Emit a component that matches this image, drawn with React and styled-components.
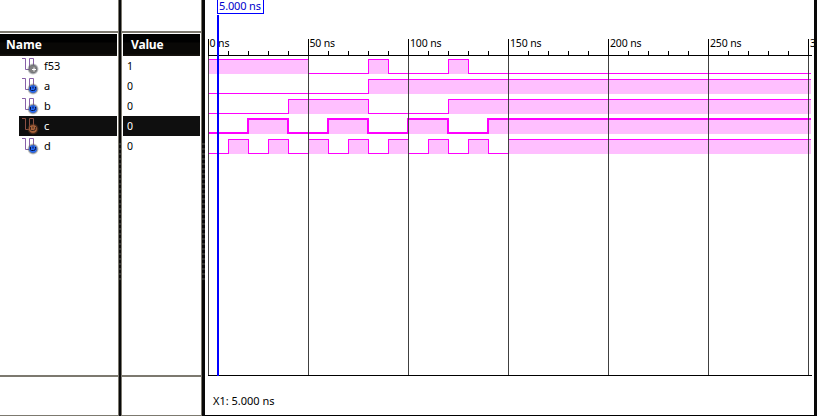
import React from "react";
import styled, { createGlobalStyle, css } from "styled-components";

const GlobalStyle = createGlobalStyle`
  * { box-sizing: border-box; }
  body { margin: 0; background: #fff; overflow: hidden; }
`;

const Window = styled.div`
  display: flex;
  width: 817px;
  height: 416px;
  background: #fff;
  color: #000;
  font: 11px/20px "Noto Sans", "Open Sans", sans-serif;
  overflow: hidden;
`;

const Column = styled.section`
  display: flex;
  flex-direction: column;
  width: ${(p) => p.$width}px;
  flex: none;
  border-bottom: 1px solid #7c796f;
`;

const TopSpace = styled.div`
  height: 33px;
  flex: none;
  border-bottom: 2px solid #7c796f;
`;

const ColumnHeader = styled.header`
  height: 22px;
  margin: 1px 1px 0 ${(p) => p.$inset || 0}px;
  padding-left: ${(p) => p.$pad}px;
  flex: none;
  background: linear-gradient(#000 0 8px, #090806 9px 20px, #17130f 21px);
  color: #fff;
  font: 700 12px/22px "Open Sans", sans-serif;
  letter-spacing: ${(p) => p.$spacing || 0}px;
`;

const Rows = styled.div`
  height: 321px;
  flex: none;
  border-bottom: 2px solid #7c796f;
`;

const Row = styled.div`
  display: flex;
  align-items: center;
  height: 20px;
  margin: 0 1px 0 ${(p) => p.$inset}px;
  padding-left: ${(p) => p.$pad}px;
  ${(p) =>
    p.$selected &&
    css`
      background: #0f0f0f;
      color: #fff;
    `}
`;

const ValueText = styled.span`
  font-size: 10.5px;
  line-height: 20px;
`;

const SignalIcon = styled.svg`
  width: 18px;
  height: 18px;
  flex: none;
  margin-right: 4px;
`;

const Splitter = styled.div`
  width: ${(p) => p.$width}px;
  flex: none;
  padding-top: 143px;
  background: #090909;
  border: solid #7c796f;
  border-width: 0 ${(p) => p.$right}px 0 1px;
`;

const Grip = styled.div`
  height: 138px;
  background: repeating-linear-gradient(#33332f 0 2px, #0b0b0b 2px 5px);
`;

const WavePanel = styled.section`
  display: flex;
  flex-direction: column;
  width: 612px;
  flex: none;
  border-bottom: 1px solid #000;
  border-right: 3px solid #080808;
`;

const Chart = styled.svg`
  display: block;
  width: 609px;
  height: 376px;
  flex: none;
`;

const ChartText = styled.text`
  font: ${(p) => p.$size || 11}px "Noto Sans", sans-serif;
  fill: ${(p) => p.$color || "#000"};
`;

const Status = styled.footer`
  flex: 1;
  padding: 15px 0 0 8px;
`;

const signals = [
  { name: "f53", value: "1", initial: 1, edges: [50, 80, 90, 120, 130], kind: "output" },
  { name: "a", value: "0", initial: 0, edges: [80] },
  { name: "b", value: "0", initial: 0, edges: [40, 80, 120] },
  { name: "c", value: "0", initial: 0, edges: [20, 40, 60, 80, 100, 120, 140], selected: true },
  {
    name: "d",
    value: "0",
    initial: 0,
    edges: [10, 20, 30, 40, 50, 60, 70, 80, 90, 100, 110, 120, 130, 140, 150],
  },
];

const ORIGIN = 3;
const END = 606;
const timeX = (t) => ORIGIN + t * 2;

function Icon({ selected, output }) {
  const wire = selected ? "#8d5043" : "#8860a8";
  const fill = selected ? "#a8643c" : output ? "#808080" : "#2a6cf5";
  const id = selected ? "glow-sel" : output ? "glow-out" : "glow-in";
  return (
    <SignalIcon viewBox="0 0 18 18">
      <defs>
        <radialGradient id={id}>
          <stop offset="0.55" stopColor={selected ? "#754126" : "#454b55"} />
          <stop offset="1" stopColor={selected ? "#754126" : "#777"} stopOpacity="0" />
        </radialGradient>
      </defs>
      <path d="M0 1.5H3.5V12.5H7.5V1.5H11.5V9" fill="none" stroke={wire} />
      <circle cx="11" cy="12" r="6" fill={`url(#${id})`} />
      <circle cx="11" cy="12" r="3.8" fill={fill} />
      {output ? (
        <path d="M10 12.5H14M12 10.5V14.5" stroke="#fff" />
      ) : (
        <path
          d="M8.5 10V12.5Q8.5 13.5 9.5 13.5H11.5Q13.5 13.5 13.5 11.5V10M11 9.5V11.5"
          fill="none"
          stroke={selected ? "#3a241b" : "#041040"}
        />
      )}
    </SignalIcon>
  );
}

function Wave({ signal, index }) {
  const thick = signal.selected ? 2 : 1;
  const high = 60 - thick + index * 20;
  const low = high + 14;
  const times = [0, ...signal.edges];
  return times.map((t, i) => {
    const on = (signal.initial + i) % 2 === 1;
    const x = timeX(t);
    const end = i === times.length - 1 ? END : timeX(times[i + 1]);
    return (
      <g key={t}>
        {on && <rect x={x} y={high + thick} width={end - x} height={14} fill="#ffbfff" />}
        <rect x={x} y={on ? high : low} width={end - x} height={thick} fill="#f0f" />
        {i > 0 && (
          <rect x={x - thick + 1} y={high} width={thick} height={14 + thick} fill="#f0f" />
        )}
      </g>
    );
  });
}

const labelWidth = { 0: 20, 50: 25.5 };

function Waveforms() {
  const ticks = Array.from({ length: 31 }, (_, i) => i * 10);
  const majors = [0, 50, 100, 150, 200, 250, 300];
  return (
    <Chart viewBox="0 0 609 376" shapeRendering="crispEdges">
      <defs>
        <clipPath id="plot">
          <rect width="607" height="376" />
        </clipPath>
        <clipPath id="ruler">
          <rect width="609" height="56" />
        </clipPath>
      </defs>
      <g clipPath="url(#plot)">
        {signals.map((s, i) => (
          <Wave key={s.name} signal={s} index={i} />
        ))}
        {majors.map((t) => (
          <g key={t}>
            <rect x={timeX(t)} y="56" width="1" height="320" fill="#404040" />
            <rect x={timeX(t)} y="39" width="1" height="17" />
          </g>
        ))}
        {ticks.map((t) => (
          <rect key={t} x={timeX(t)} y="51" width="1" height="4" />
        ))}
        <rect x="3" y="55" width="604" height="1" />
        <rect x="3" y="375" width="604" height="1" />
      </g>
      <g clipPath="url(#ruler)">
        {majors.map((t) => (
          <ChartText
            key={t}
            $size={10.5}
            x={timeX(t) + (t < 100 ? 1.5 : 2)}
            y="47"
            textLength={labelWidth[t] || 31.5}
          >
            {`${t} ns`}
          </ChartText>
        ))}
      </g>
      <rect x="12" y="15" width="2" height="361" fill="#00f" />
      <rect x="12.5" y="-2.5" width="46" height="16" fill="#fff" stroke="#00f" />
      <ChartText x="14" y="10" $color="#00c" textLength="42">
        5.000 ns
      </ChartText>
    </Chart>
  );
}

export default function App() {
  return (
    <>
      <GlobalStyle />
      <Window>
        <Column $width={118}>
          <TopSpace />
          <ColumnHeader $pad={6}>Name</ColumnHeader>
          <Rows>
            {signals.map((s) => (
              <Row key={s.name} $inset={19} $pad={3} $selected={s.selected}>
                <Icon selected={s.selected} output={s.kind === "output"} />
                {s.name}
              </Row>
            ))}
          </Rows>
        </Column>
        <Splitter $width={4} $right={1}>
          <Grip />
        </Splitter>
        <Column $width={79}>
          <TopSpace />
          <ColumnHeader $inset={1} $pad={8} $spacing={-0.3}>
            Value
          </ColumnHeader>
          <Rows>
            {signals.map((s) => (
              <Row key={s.name} $inset={1} $pad={4} $selected={s.selected}>
                <ValueText>{s.value}</ValueText>
              </Row>
            ))}
          </Rows>
        </Column>
        <Splitter $width={4} $right={0}>
          <Grip />
        </Splitter>
        <WavePanel>
          <Waveforms />
          <Status>X1: 5.000 ns</Status>
        </WavePanel>
      </Window>
    </>
  );
}
